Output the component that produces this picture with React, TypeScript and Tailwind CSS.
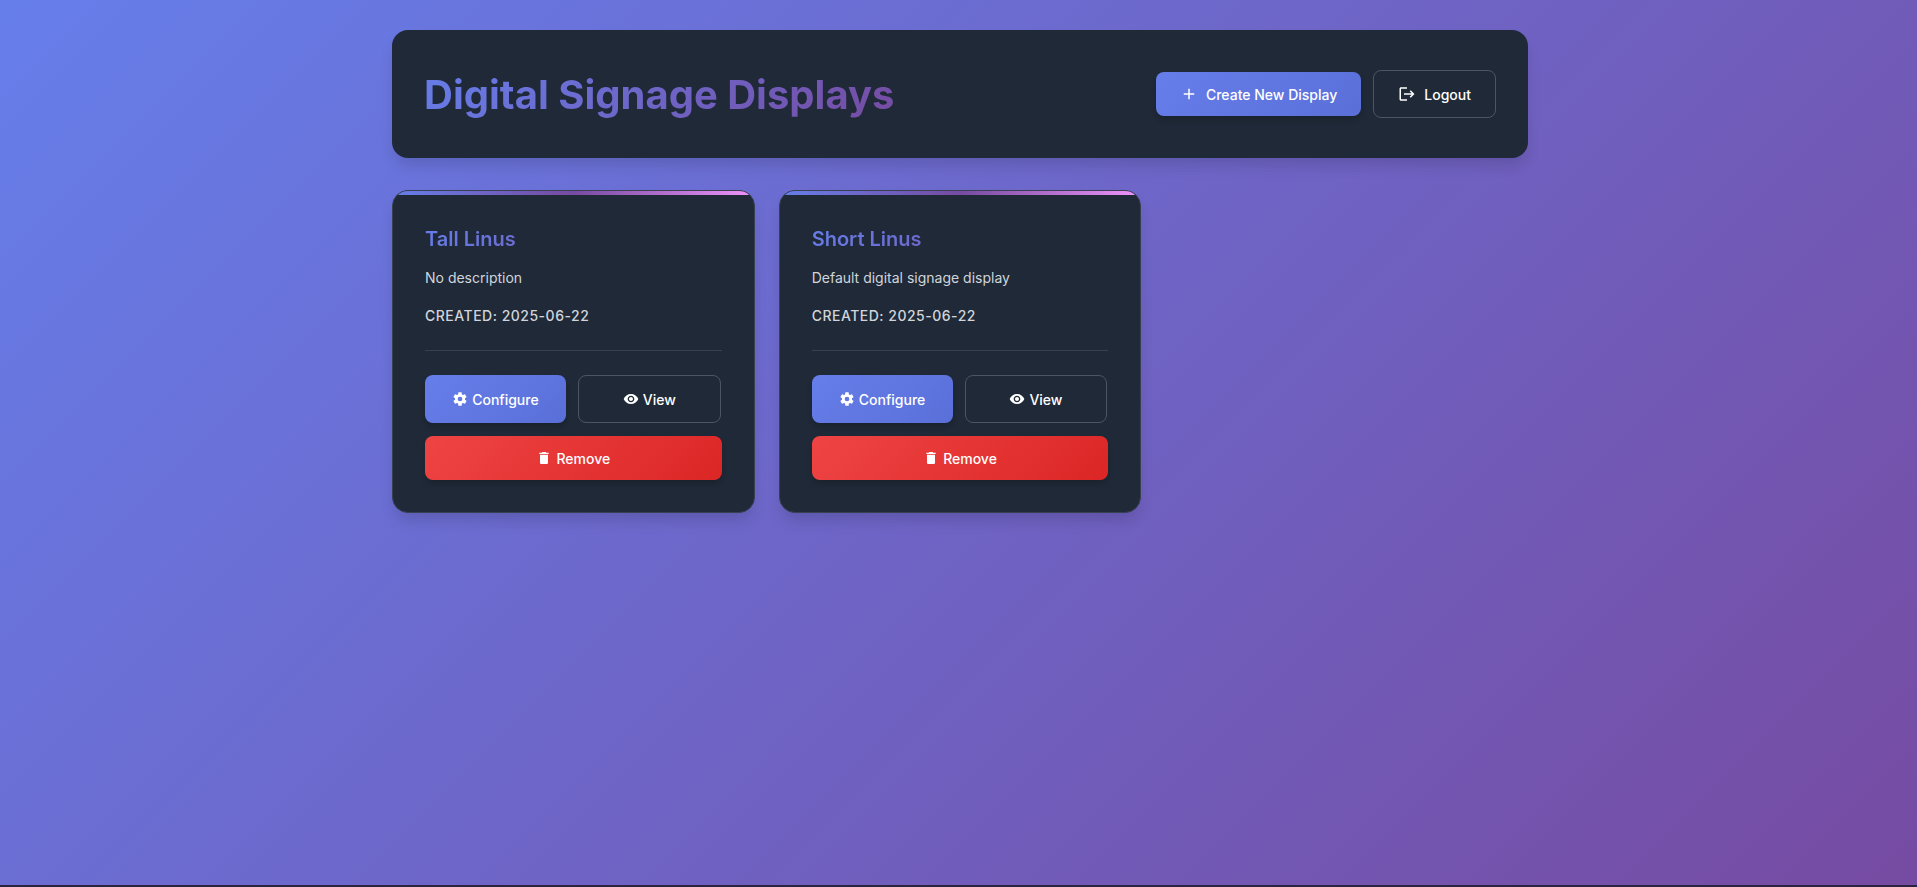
import type { ReactNode } from 'react';

const ICONS = {
  plus: 'M19 13h-6v6h-2v-6H5v-2h6V5h2v6h6v2z',
  logout:
    'M17 7l-1.41 1.41L18.17 11H8v2h10.17l-2.58 2.58L17 17l5-5zM4 5h8V3H4c-1.1 0-2 .9-2 2v14c0 1.1.9 2 2 2h8v-2H4V5z',
  cog: 'M12 15.5A3.5 3.5 0 0 1 8.5 12 3.5 3.5 0 0 1 12 8.5a3.5 3.5 0 0 1 3.5 3.5 3.5 3.5 0 0 1-3.5 3.5m7.43-2.53c.04-.32.07-.64.07-.97s-.03-.66-.07-1l2.11-1.63c.19-.15.24-.42.12-.64l-2-3.46c-.12-.22-.39-.31-.61-.22l-2.49 1c-.52-.39-1.06-.73-1.69-.98l-.37-2.65A.506.506 0 0 0 14 2h-4c-.25 0-.46.18-.5.42l-.37 2.65c-.63.25-1.17.59-1.69.98l-2.49-1c-.22-.09-.49 0-.61.22l-2 3.46c-.13.22-.07.49.12.64L4.57 11c-.04.34-.07.67-.07 1s.03.65.07.97l-2.11 1.66c-.19.15-.25.42-.12.64l2 3.46c.12.22.39.3.61.22l2.49-1.01c.52.4 1.06.74 1.69.99l.37 2.65c.04.24.25.42.5.42h4c.25 0 .46-.18.5-.42l.37-2.65c.63-.26 1.17-.59 1.69-.99l2.49 1.01c.22.08.49 0 .61-.22l2-3.46c.12-.22.07-.49-.12-.64l-2.11-1.66Z',
  eye: 'M12 4.5C7 4.5 2.73 7.61 1 12c1.73 4.39 6 7.5 11 7.5s9.27-3.11 11-7.5c-1.73-4.39-6-7.5-11-7.5zM12 17c-2.76 0-5-2.24-5-5s2.24-5 5-5 5 2.24 5 5-2.24 5-5 5zm0-8c-1.66 0-3 1.34-3 3s1.34 3 3 3 3-1.34 3-3-1.34-3-3-3z',
  trash: 'M6 19c0 1.1.9 2 2 2h8c1.1 0 2-.9 2-2V7H6v12zM19 4h-3.5l-1-1h-5l-1 1H5v2h14V4z',
};

function Icon({ name, large = false }: { name: keyof typeof ICONS; large?: boolean }) {
  return (
    <svg
      viewBox="0 0 24 24"
      fill="currentColor"
      aria-hidden="true"
      className={large ? 'size-[18px] shrink-0' : 'size-4 shrink-0'}
    >
      <path d={ICONS[name]} />
    </svg>
  );
}

const primary =
  'bg-[linear-gradient(135deg,#667eea_0%,#5a6fd8_100%)] shadow-[0_4px_6px_-1px_rgba(0,0,0,0.2)]';
const outline = 'border border-[#4b5563]';
const danger =
  'bg-[linear-gradient(135deg,#ef4444_0%,#dc2626_100%)] shadow-[0_4px_6px_-1px_rgba(0,0,0,0.2)]';

function Button({
  icon,
  largeIcon = false,
  className,
  children,
}: {
  icon: keyof typeof ICONS;
  largeIcon?: boolean;
  className: string;
  children: ReactNode;
}) {
  return (
    <button
      type="button"
      className={`flex cursor-pointer items-center justify-center rounded-lg text-sm font-medium text-white ${className}`}
    >
      <Icon name={icon} large={largeIcon} />
      <span className="pt-0.5">{children}</span>
    </button>
  );
}

type Display = { name: string; description: string; created: string };

const displays: Display[] = [
  { name: 'Tall Linus', description: 'No description', created: '2025-06-22' },
  { name: 'Short Linus', description: 'Default digital signage display', created: '2025-06-22' },
];

function DisplayCard({ display }: { display: Display }) {
  return (
    <article className="relative overflow-hidden rounded-2xl border border-[#374151] bg-[#1f2937] p-8 shadow-[0_10px_15px_-3px_rgba(0,0,0,0.14)]">
      <div className="absolute inset-x-0 top-0 h-1 bg-[linear-gradient(90deg,#667eea_0%,#764ba2_50%,#f093fb_100%)]" />
      <h2 className="bg-[linear-gradient(135deg,#667eea_0%,#764ba2_100%)] bg-clip-text text-xl leading-8 font-semibold text-transparent">
        {display.name}
      </h2>
      <p className="mt-3 text-sm leading-[22px] text-[#d1d5db]">{display.description}</p>
      <p className="mt-4 text-sm leading-[22px] font-medium tracking-[0.5px] text-[#d1d5db] uppercase">
        Created: {display.created}
      </p>
      <div className="mt-[23px] flex flex-col gap-[13px] border-t border-[#374151] pt-6">
        <div className="flex gap-3 pr-px">
          <Button icon="cog" className={`h-12 flex-1 gap-1 ${primary}`}>
            Configure
          </Button>
          <Button icon="eye" className={`h-12 flex-1 gap-1 ${outline}`}>
            View
          </Button>
        </div>
        <Button icon="trash" className={`h-11 gap-1 ${danger}`}>
          Remove
        </Button>
      </div>
    </article>
  );
}

export default function App() {
  return (
    <div className="min-h-screen border-b-2 border-[#2b2440] bg-[linear-gradient(135deg,#667eea_0%,#764ba2_100%)] pt-[30px] pl-[3px] font-['Inter',sans-serif]">
      <div className="mx-auto flex max-w-[1200px] flex-col gap-8 px-8 pb-8">
        <header className="flex flex-wrap items-center justify-between gap-4 rounded-2xl bg-[#1f2937] px-8 py-[31px] shadow-[0_10px_15px_-3px_rgba(0,0,0,0.14)]">
          <h1 className="bg-[linear-gradient(135deg,#667eea_0%,#764ba2_100%)] bg-clip-text pt-0.5 text-[40px] leading-[64px] font-bold text-transparent">
            Digital Signage Displays
          </h1>
          <div className="flex items-center gap-3">
            <Button icon="plus" largeIcon className={`h-11 gap-2 px-6 ${primary}`}>
              Create New Display
            </Button>
            <Button icon="logout" largeIcon className={`h-12 gap-2 px-6 ${outline}`}>
              Logout
            </Button>
          </div>
        </header>
        <main className="grid gap-6 md:grid-cols-2 lg:grid-cols-3">
          {displays.map((display) => (
            <DisplayCard key={display.name} display={display} />
          ))}
        </main>
      </div>
    </div>
  );
}
